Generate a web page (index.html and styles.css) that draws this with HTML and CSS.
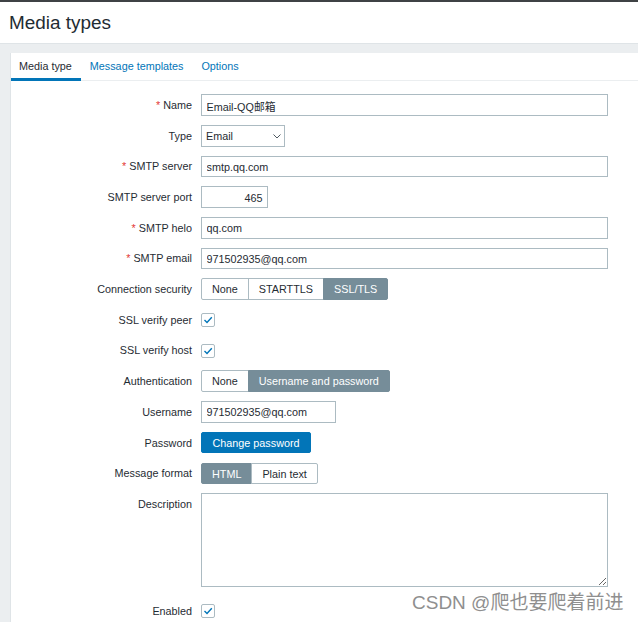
FILE: index.html
```html
<!DOCTYPE html>
<html lang="en">
<head>
<meta charset="utf-8">
<title>Media types</title>
<link rel="stylesheet" href="styles.css">
</head>
<body>
<header class="page-header">
  <h1 class="page-title">Media types</h1>
</header>
<main class="content">
  <div class="panel">
    <ul class="tabs">
      <li class="tab active">Media type</li>
      <li class="tab">Message templates</li>
      <li class="tab">Options</li>
    </ul>
    <form class="form">
      <div class="row">
        <label class="lbl"><span class="req">*</span>Name</label>
        <div class="field"><input class="text w-wide" type="text" value="Email-QQ邮箱"></div>
      </div>
      <div class="row">
        <label class="lbl">Type</label>
        <div class="field">
          <div class="select">Email
            <svg class="chev" width="8" height="5" viewBox="0 0 8 5"><polyline points="0.5,0.5 4,4 7.5,0.5" fill="none" stroke="#4f5a61" stroke-width="1"/></svg>
          </div>
        </div>
      </div>
      <div class="row">
        <label class="lbl"><span class="req">*</span>SMTP server</label>
        <div class="field"><input class="text w-wide" type="text" value="smtp.qq.com"></div>
      </div>
      <div class="row">
        <label class="lbl">SMTP server port</label>
        <div class="field"><input class="text w-port" type="text" value="465"></div>
      </div>
      <div class="row">
        <label class="lbl"><span class="req">*</span>SMTP helo</label>
        <div class="field"><input class="text w-wide" type="text" value="qq.com"></div>
      </div>
      <div class="row">
        <label class="lbl"><span class="req">*</span>SMTP email</label>
        <div class="field"><input class="text w-wide" type="text" value="971502935@qq.com"></div>
      </div>
      <div class="row">
        <label class="lbl">Connection security</label>
        <div class="field">
          <div class="seg">
            <span class="seg-item">None</span>
            <span class="seg-item">STARTTLS</span>
            <span class="seg-item on">SSL/TLS</span>
          </div>
        </div>
      </div>
      <div class="row">
        <label class="lbl">SSL verify peer</label>
        <div class="field">
          <span class="check"><svg width="12" height="12" viewBox="0 0 12 12"><polyline points="2.5,6 5,8.5 9.8,3.2" fill="none" stroke="#0275b8" stroke-width="1.4"/></svg></span>
        </div>
      </div>
      <div class="row">
        <label class="lbl">SSL verify host</label>
        <div class="field">
          <span class="check"><svg width="12" height="12" viewBox="0 0 12 12"><polyline points="2.5,6 5,8.5 9.8,3.2" fill="none" stroke="#0275b8" stroke-width="1.4"/></svg></span>
        </div>
      </div>
      <div class="row">
        <label class="lbl">Authentication</label>
        <div class="field">
          <div class="seg">
            <span class="seg-item">None</span>
            <span class="seg-item on">Username and password</span>
          </div>
        </div>
      </div>
      <div class="row">
        <label class="lbl">Username</label>
        <div class="field"><input class="text w-user" type="text" value="971502935@qq.com"></div>
      </div>
      <div class="row">
        <label class="lbl">Password</label>
        <div class="field"><button class="btn" type="button">Change password</button></div>
      </div>
      <div class="row">
        <label class="lbl">Message format</label>
        <div class="field">
          <div class="seg">
            <span class="seg-item on">HTML</span>
            <span class="seg-item">Plain text</span>
          </div>
        </div>
      </div>
      <div class="row row-area">
        <label class="lbl">Description</label>
        <div class="field"><textarea class="area"></textarea></div>
      </div>
      <div class="row">
        <label class="lbl">Enabled</label>
        <div class="field">
          <span class="check"><svg width="12" height="12" viewBox="0 0 12 12"><polyline points="2.5,6 5,8.5 9.8,3.2" fill="none" stroke="#0275b8" stroke-width="1.4"/></svg></span>
        </div>
      </div>
    </form>
  </div>
</main>
<div class="watermark">CSDN @爬也要爬着前进</div>
</body>
</html>
```
FILE: styles.css
```css
html, body {
  margin: 0;
  padding: 0;
}
body {
  font-family: "Liberation Sans", Arial, "Noto Sans CJK SC", sans-serif;
  font-size: 10.8px;
  color: #1f2c33;
  background: #ebeef0;
  overflow: hidden;
}
.page-header {
  background: #fff;
  border-top: 2px solid #3f4245;
  height: 41px;
  box-sizing: content-box;
}
.page-title {
  margin: 0;
  padding: 10px 0 0 9px;
  font-weight: normal;
  font-size: 18.9px;
  line-height: 21px;
  color: #1f2c33;
}
.content {
  border-top: 1px solid #dfe4e7;
  padding: 9px 0 0 10px;
}
.panel {
  background: #fff;
  border-left: 1px solid #dfe4e7;
  min-height: 600px;
}
.tabs {
  list-style: none;
  margin: 0;
  padding: 0;
  display: flex;
  border-bottom: 1px solid #ebeef0;
  height: 27px;
}
.tab {
  box-sizing: border-box;
  height: 28px;
  margin-bottom: -1px;
  padding: 0 9px;
  line-height: 27px;
  color: #0275b8;
}
.tab.active {
  color: #1f2c33;
  box-shadow: inset 0 -3px 0 #0275b8;
}
.tab:first-child {
  padding-left: 8px;
}
.form {
  padding-top: 13.3px;
}
.row {
  display: grid;
  grid-template-columns: 181px 1fr;
  grid-template-rows: 21.6px;
  column-gap: 9px;
  margin-bottom: 9.1px;
}
.row-area {
  grid-template-rows: 93.6px;
  margin-bottom: 13.6px;
}
.lbl {
  text-align: right;
  box-sizing: border-box;
  padding-top: 0.7px;
  line-height: 20.9px;
  white-space: nowrap;
}
.req {
  color: #e33734;
  margin-right: 3px;
}
.field {
  display: flex;
  align-items: flex-start;
}
.text {
  box-sizing: border-box;
  height: 21.6px;
  border: 1px solid #acbbc2;
  border-radius: 0;
  padding: 1px 4.5px 0;
  font: inherit;
  color: #1f2c33;
  background: #fff;
  outline: none;
  margin: 0;
}
.w-wide { width: 407px; }
.w-port { width: 67px; text-align: right; }
.w-user { width: 135px; }
.select {
  box-sizing: border-box;
  width: 84px;
  height: 21.6px;
  border: 1px solid #acbbc2;
  padding: 0 4px;
  line-height: 20.4px;
  position: relative;
}
.chev {
  position: absolute;
  right: 3px;
  top: 8.5px;
}
.seg {
  display: flex;
}
.seg-item {
  box-sizing: border-box;
  height: 21.6px;
  line-height: 20.4px;
  padding: 0 10px;
  border: 1px solid #acbbc2;
  margin-left: -1px;
  background: #fff;
  white-space: nowrap;
}
.seg-item:first-child {
  margin-left: 0;
  border-radius: 2px 0 0 2px;
}
.seg-item:last-child {
  border-radius: 0 2px 2px 0;
}
.seg-item.on {
  background: #768d99;
  border-color: #768d99;
  color: #fff;
}
.check {
  box-sizing: border-box;
  width: 14px;
  height: 14px;
  margin-top: 3.8px;
  border: 1px solid #acbbc2;
  border-radius: 2px;
  display: flex;
  align-items: center;
  justify-content: center;
  background: #fff;
}
.btn {
  box-sizing: border-box;
  height: 21.6px;
  padding: 1px 10.5px 0;
  border: 1px solid #0275b8;
  border-radius: 2px;
  background: #0275b8;
  color: #fff;
  font: inherit;
  line-height: 19.6px;
  margin: 0;
}
.area {
  box-sizing: border-box;
  width: 407px;
  height: 93.6px;
  border: 1px solid #acbbc2;
  border-radius: 0;
  margin: 0;
  padding: 4px;
  font: inherit;
  display: block;
}
.watermark {
  position: absolute;
  left: 412px;
  top: 593px;
  font-family: "Liberation Sans", Arial, "Noto Sans CJK SC", sans-serif;
  font-size: 19px;
  line-height: 20px;
  color: #8f8f8f;
  text-shadow: 0 0 1px #fff, 1px 1px 0 #fff;
  white-space: nowrap;
}
```
